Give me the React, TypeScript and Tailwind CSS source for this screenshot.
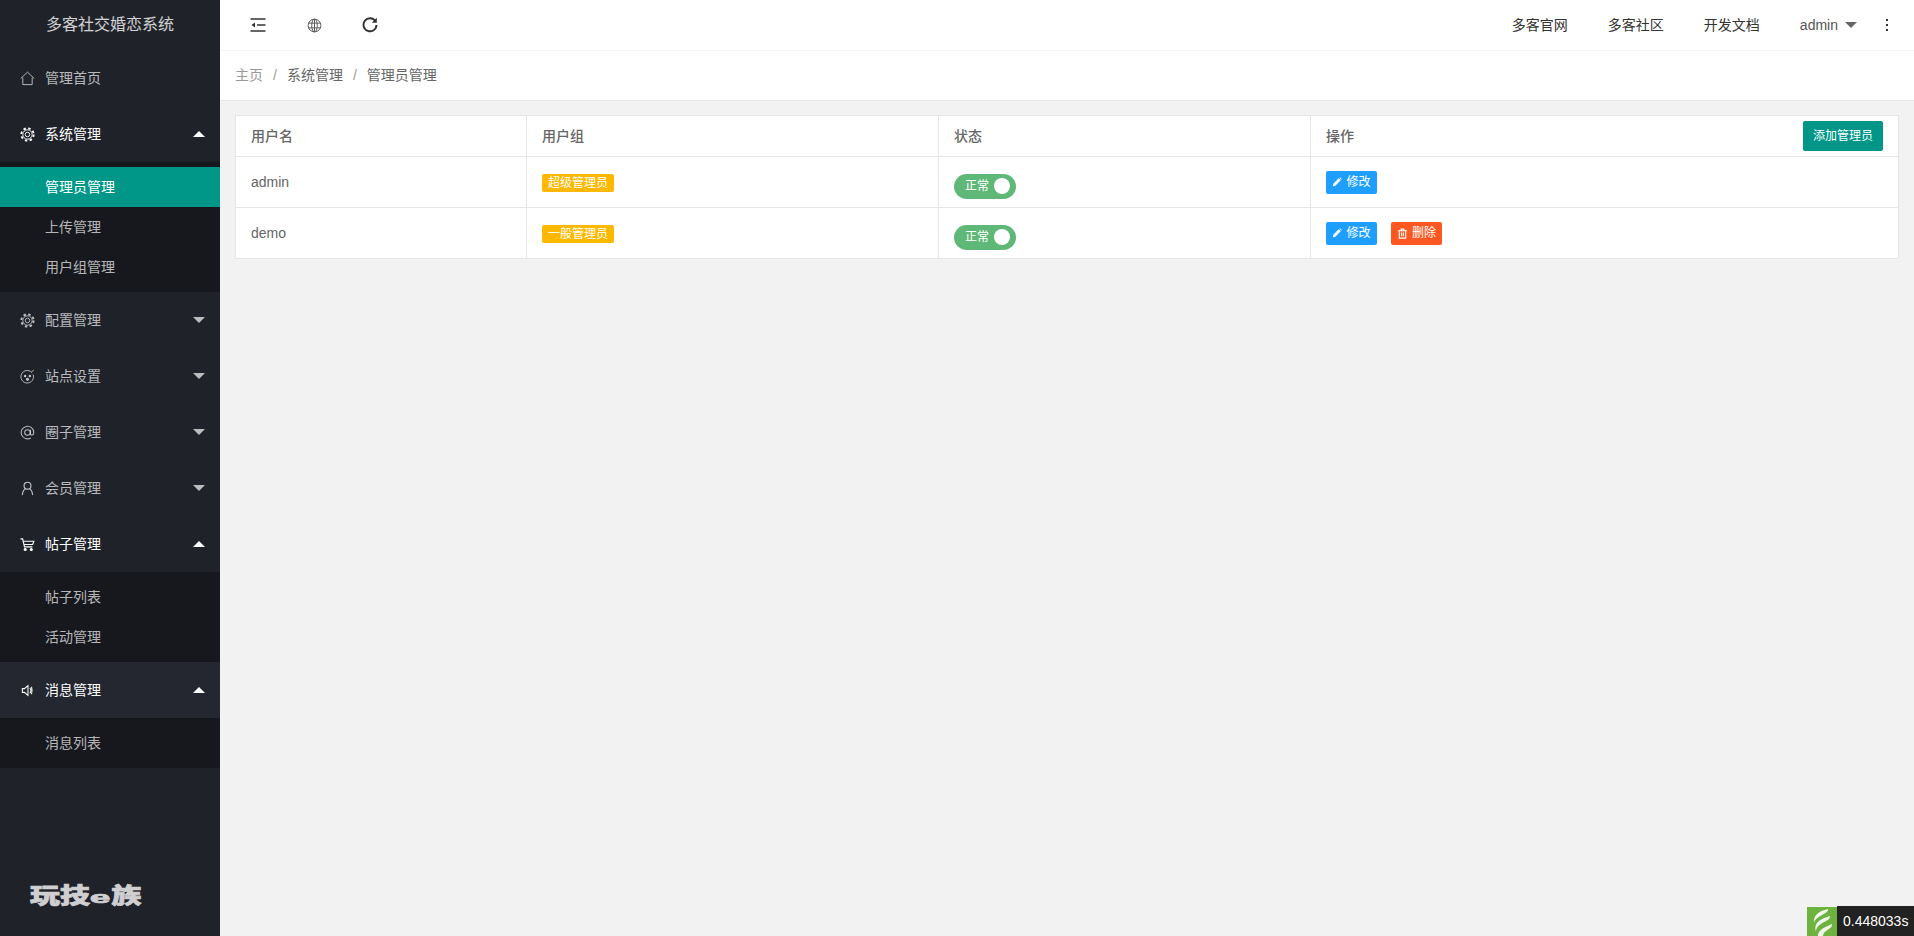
import type { ReactNode } from "react";

const gear = (
    <svg viewBox="0 0 16 16" className="w-[15px] h-[15px]" fill="none" stroke="currentColor">
        <circle cx="8" cy="8" r="6.600" strokeWidth="2" strokeDasharray="2.600 2.580" />
        <circle cx="8" cy="8" r="5" strokeWidth="1" />
        <circle cx="8" cy="8" r="2.400" strokeWidth="1" />
    </svg>
);

const icons: Record<string, ReactNode> = {
    home: (
        <svg viewBox="0 0 16 16" className="w-[15px] h-[15px]" fill="none" stroke="currentColor" strokeWidth="1">
            <path d="M.8 8 8 1.200 15.200 8" />
            <path d="M3 7v7.500h10V7" />
        </svg>
    ),
    gear,
    face: (
        <svg viewBox="0 0 16 16" className="w-[15px] h-[15px]" fill="none" stroke="currentColor" strokeWidth="1">
            <path d="M12.500 3.600A6.700 6.700 0 1 0 14 6" />
            <path d="M12 3.500 14.800 1" />
            <circle cx="5.500" cy="7.500" r=".9" fill="currentColor" />
            <circle cx="10.500" cy="7.500" r=".9" fill="currentColor" />
            <circle cx="8" cy="11" r="1.200" fill="currentColor" />
        </svg>
    ),
    at: (
        <svg viewBox="0 0 16 16" className="w-[15px] h-[15px]" fill="none" stroke="currentColor" strokeWidth="1.100">
            <circle cx="8" cy="8" r="3" />
            <path d="M11 5v4.300c0 2.200 3.700 2 3.700-1.300A6.700 6.700 0 1 0 11.500 13.800" />
        </svg>
    ),
    user: (
        <svg viewBox="0 0 16 16" className="w-[15px] h-[15px]" fill="none" stroke="currentColor" strokeWidth="1.200">
            <circle cx="8" cy="5" r="3.700" />
            <path d="M2.500 15c.4-3.500 1.800-6 3.300-6.700M13.500 15c-.4-3.500-1.800-6-3.300-6.700" />
        </svg>
    ),
    cart: (
        <svg viewBox="0 0 16 16" className="w-[15px] h-[15px]" fill="none" stroke="currentColor" strokeWidth="1.200">
            <path d="M.5 2h2.300l2 8.500h8.400" />
            <path d="M3.500 4.500h11.300l-1.300 3.500H4.300" />
            <circle cx="5.500" cy="13.300" r="1.100" fill="currentColor" />
            <circle cx="12" cy="13.300" r="1.100" fill="currentColor" />
        </svg>
    ),
    sound: (
        <svg viewBox="0 0 16 16" className="w-[15px] h-[15px]" fill="none" stroke="currentColor" strokeWidth="1.100">
            <path d="M2.500 6h2.200L8.500 2.800v10.400L4.700 10H2.500z" />
            <path d="M10.500 5c1.200 1.600 1.200 4.400 0 6M12.300 4c.7 2.400.7 5.600 0 8" />
        </svg>
    ),
};

type Group = { name: string; icon: string; open?: boolean; hover?: boolean; children?: { name: string; active?: boolean }[] };

const menu: Group[] = [
    { name: "管理首页", icon: "home" },
    {
        name: "系统管理",
        icon: "gear",
        open: true,
        children: [{ name: "管理员管理", active: true }, { name: "上传管理" }, { name: "用户组管理" }],
    },
    { name: "配置管理", icon: "gear", children: [] },
    { name: "站点设置", icon: "face", children: [] },
    { name: "圈子管理", icon: "at", children: [] },
    { name: "会员管理", icon: "user", children: [] },
    { name: "帖子管理", icon: "cart", open: true, children: [{ name: "帖子列表" }, { name: "活动管理" }] },
    { name: "消息管理", icon: "sound", open: true, hover: true, children: [{ name: "消息列表" }] },
];

const rows = [
    { name: "admin", group: "超级管理员", canDelete: false },
    { name: "demo", group: "一般管理员", canDelete: true },
];

function Sidebar() {
    return (
        <aside className="w-[220px] shrink-0 h-full bg-[#20222a] flex flex-col overflow-hidden">
            <div className="h-[50px] flex items-center justify-center text-[16px] text-white/80 shrink-0">多客社交婚恋系统</div>
            {menu.map((item) => (
                <div key={item.name}>
                    <div
                        className={`h-[56px] flex items-center pl-[20px] pr-[15px] text-[14px] ${
                            item.open ? "text-white" : "text-white/70"
                        } ${item.hover ? "bg-[#242730]" : ""}`}
                    >
                        <span className="w-[25px] shrink-0 flex">{icons[item.icon]}</span>
                        <span className="flex-1">{item.name}</span>
                        {item.children &&
                            (item.open ? (
                                <span className="w-0 h-0 border-x-[6px] border-x-transparent border-b-[6px] border-b-white" />
                            ) : (
                                <span className="w-0 h-0 border-x-[6px] border-x-transparent border-t-[6px] border-t-white/70" />
                            ))}
                    </div>
                    {item.open && item.children && (
                        <div className="bg-[#17181e] py-[5px]">
                            {item.children.map((c) => (
                                <div
                                    key={c.name}
                                    className={`h-[40px] flex items-center pl-[45px] text-[14px] ${
                                        c.active ? "bg-[#009688] text-white" : "text-white/70"
                                    }`}
                                >
                                    {c.name}
                                </div>
                            ))}
                        </div>
                    )}
                </div>
            ))}
            <div className="mt-auto pb-[24px] pl-[30px] shrink-0">
                <div className="origin-left scale-x-[1.36] font-black text-[22px] leading-[28px] text-[#cfcfd1] whitespace-nowrap [-webkit-text-stroke:0.7px_#cfcfd1]">
                    玩技
                    <span className="inline-block w-[16px] origin-left scale-x-[1.6] text-[17px]">e</span>族
                </div>
            </div>
        </aside>
    );
}

function Header() {
    return (
        <header className="h-[51px] bg-white border-b border-[#f6f6f6] flex items-center justify-between pl-[10px] pr-[7px] shrink-0">
            <div className="flex items-center text-[#333]">
                <span className="w-[56px] flex justify-center">
                    <svg viewBox="0 0 16 16" className="w-[16px] h-[16px]" fill="none" stroke="currentColor" strokeWidth="1.500">
                        <path d="M.5 2h15M.5 14h15M7 8h8.500" />
                        <path d="M5 5.500v5L1.500 8z" fill="currentColor" stroke="none" />
                    </svg>
                </span>
                <span className="w-[56px] flex justify-center text-[#555]">
                    <svg viewBox="0 0 16 16" className="w-[15px] h-[15px]" fill="none" stroke="currentColor" strokeWidth="1">
                        <circle cx="8" cy="8" r="6.800" />
                        <ellipse cx="8" cy="8" rx="3" ry="6.800" />
                        <path d="M8 1.200v13.600M1.600 5.500h12.800M1.600 10.500h12.800" />
                    </svg>
                </span>
                <span className="w-[56px] flex justify-center">
                    <svg viewBox="0 0 16 16" className="w-[16px] h-[16px]" fill="none" stroke="currentColor" strokeWidth="1.900">
                        <path d="M13.500 4.300A6.500 6.500 0 1 0 14.500 8" />
                        <path d="M14.800 .8v5h-5z" fill="currentColor" stroke="none" />
                    </svg>
                </span>
            </div>
            <div className="flex items-center text-[14px] text-[#333]">
                <span className="px-[20px]">多客官网</span>
                <span className="px-[20px]">多客社区</span>
                <span className="px-[20px]">开发文档</span>
                <span className="pl-[20px] pr-[10px] flex items-center text-[#555]">
                    admin
                    <span className="ml-[7px] w-0 h-0 border-x-[6px] border-x-transparent border-t-[6px] border-t-[#666]" />
                </span>
                <span className="w-[40px] flex justify-center">
                    <svg viewBox="0 0 4 14" className="w-[4px] h-[14px]" fill="#333">
                        <rect x="1" y="1" width="2" height="2" />
                        <rect x="1" y="6" width="2" height="2" />
                        <rect x="1" y="11" width="2" height="2" />
                    </svg>
                </span>
            </div>
        </header>
    );
}

function Breadcrumb() {
    return (
        <div className="h-[50px] bg-white border-b border-[#e6e6e6] flex items-center pl-[15px] text-[14px] shrink-0">
            <span className="text-[#999]">主页</span>
            <span className="mx-[10px] text-[#999]">/</span>
            <span className="text-[#666]">系统管理</span>
            <span className="mx-[10px] text-[#999]">/</span>
            <span className="text-[#666]">管理员管理</span>
        </div>
    );
}

function ActionButton({ color, icon, label }: { color: string; icon: ReactNode; label: string }) {
    return (
        <span className={`inline-flex items-center justify-center w-[51px] h-[23px] rounded-[2px] text-white text-[12px] gap-[4px] ${color}`}>
            {icon}
            {label}
        </span>
    );
}

const pencil = (
    <svg viewBox="0 0 12 12" className="w-[10px] h-[10px]" fill="currentColor">
        <path d="M1 11l.6-3L8 1.600 10.400 4 4 10.400zM8.800.8l.8-.5 2.100 2.100-.5.800z" />
    </svg>
);

const trash = (
    <svg viewBox="0 0 12 12" className="w-[11px] h-[11px]" fill="none" stroke="currentColor" strokeWidth="1.200">
        <path d="M1 3h10M4.500 3V1.200h3V3M2.500 3v8h7V3M5 5v4M7 5v4" />
    </svg>
);

function AdminTable() {
    return (
        <table className="w-full border-collapse bg-white text-[14px] text-[#666] table-fixed">
            <colgroup>
                <col className="w-[291px]" />
                <col className="w-[412px]" />
                <col className="w-[372px]" />
                <col />
            </colgroup>
            <thead>
                <tr className="h-[41px]">
                    <th className="border border-[#e6e6e6] px-[15px] text-left font-medium">用户名</th>
                    <th className="border border-[#e6e6e6] px-[15px] text-left font-medium">用户组</th>
                    <th className="border border-[#e6e6e6] px-[15px] text-left font-medium">状态</th>
                    <th className="border border-[#e6e6e6] px-[15px] text-left font-medium">
                        <div className="flex items-center justify-between">
                            操作
                            <span className="w-[80px] h-[30px] flex items-center justify-center bg-[#009688] rounded-[2px] text-white text-[12px] font-normal">
                                添加管理员
                            </span>
                        </div>
                    </th>
                </tr>
            </thead>
            <tbody>
                {rows.map((r) => (
                    <tr key={r.name} className="h-[51px]">
                        <td className="border border-[#e6e6e6] px-[15px]">{r.name}</td>
                        <td className="border border-[#e6e6e6] px-[15px]">
                            <span className="relative top-[1px] flex items-center justify-center w-[72px] h-[18px] bg-[#ffb800] rounded-[2px] text-white text-[12px]">
                                {r.group}
                            </span>
                        </td>
                        <td className="border border-[#e6e6e6] px-[15px]">
                            <span className="relative top-[4px] flex items-center justify-between w-[62px] h-[25px] rounded-full bg-[#5fb878] pl-[11px] pr-[6px] text-white text-[12px]">
                                正常
                                <span className="w-[16px] h-[16px] rounded-full bg-white" />
                            </span>
                        </td>
                        <td className="border border-[#e6e6e6] px-[15px]">
                            <div className="flex items-center gap-[14px]">
                                <ActionButton color="bg-[#1e9fff]" icon={pencil} label="修改" />
                                {r.canDelete && <ActionButton color="bg-[#ff5722]" icon={trash} label="删除" />}
                            </div>
                        </td>
                    </tr>
                ))}
            </tbody>
        </table>
    );
}

function TraceBadge() {
    return (
        <div className="fixed right-0 bottom-0 flex items-end">
            <span className="w-[30px] h-[29px] bg-[#6eb33f] overflow-hidden flex">
                <svg viewBox="0 0 30 29" className="w-[30px] h-[29px]" fill="#f1f6ea">
                    <path d="M21 2c1 5-13 7-14 14-1-7 4-12 14-14z" />
                    <path d="M23 9c1 6-14 6-14 16C6 16 13 12 23 9z" />
                    <path d="M25 17c1 5-9 6-9 12h-5c0-7 8-9 14-12z" />
                </svg>
            </span>
            <span className="w-[77px] h-[30px] bg-[#222] text-white text-[14px] flex items-center pl-[6px]">0.448033s</span>
        </div>
    );
}

export default function App() {
    return (
        <div className="flex h-screen overflow-hidden font-['Liberation_Sans','Noto_Sans_CJK_SC',sans-serif]">
            <Sidebar />
            <main className="flex-1 flex flex-col bg-[#f2f2f2] min-w-0">
                <Header />
                <Breadcrumb />
                <div className="pt-[14px] pl-[15px] pr-[15px]">
                    <AdminTable />
                </div>
            </main>
            <TraceBadge />
        </div>
    );
}
